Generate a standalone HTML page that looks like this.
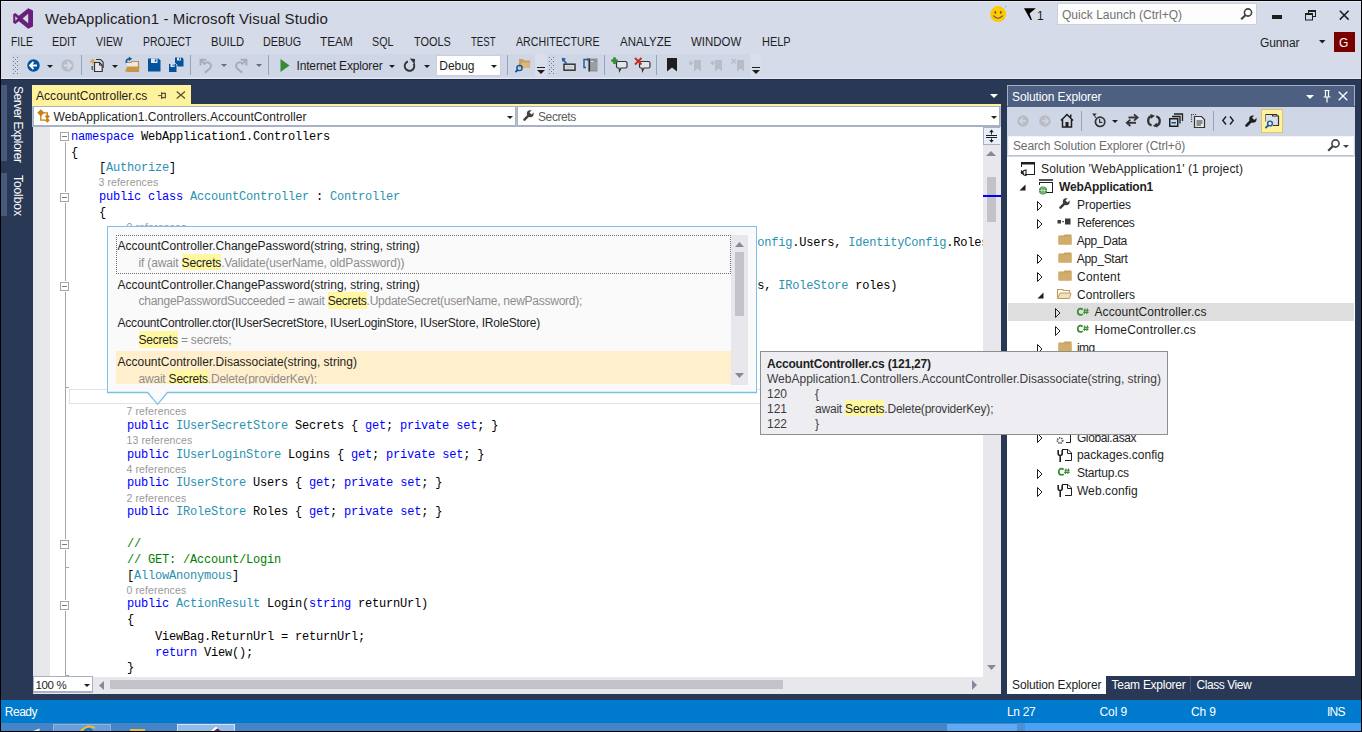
<!DOCTYPE html>
<html><head><meta charset="utf-8">
<style>
*{box-sizing:border-box}
html,body{margin:0;padding:0}
body{width:1362px;height:732px;position:relative;overflow:hidden;background:#293955;font-family:"Liberation Sans",sans-serif;font-size:12px;color:#1E1E1E}
.a{position:absolute}
.t{position:absolute;white-space:pre;line-height:1}
svg{overflow:visible}
.k{color:#0000FF}.y{color:#2B91AF}.c{color:#008000}
</style></head><body>
<div class="a" style="left:0px;top:0px;width:1362px;height:79px;background:#D6DBE9"></div>
<div class="a" style="left:1px;top:1px;width:1360px;height:1px;background:#E6EAF3"></div>
<svg class="a" style="left:13px;top:8px;" width="21" height="21" viewBox="0 0 21 21"><path d="M15.2 0.3 L20 2.4 V18.6 L15.2 20.7 L5.8 13.2 L2.3 15.9 L0.2 14.8 V6.2 L2.3 5.1 L5.8 7.8 Z M15.2 5.8 L9.6 10.5 L15.2 15.2 Z M2.3 8.2 V12.8 L4.6 10.5 Z" fill="#68217A" fill-rule="evenodd"/></svg>
<div class="t" style="left:45px;top:11.30px;font-size:15px;color:#1E1E1E;font-family:'Liberation Sans',sans-serif;letter-spacing:0.12px">WebApplication1 - Microsoft Visual Studio</div>
<div class="t" style="left:11.441666666666666px;top:35.84px;font-size:12px;color:#1E1E1E;font-family:'Liberation Sans',sans-serif;transform:scaleX(0.858);transform-origin:0 0">FILE</div>
<div class="t" style="left:51.996153846153845px;top:35.84px;font-size:12px;color:#1E1E1E;font-family:'Liberation Sans',sans-serif;transform:scaleX(0.904);transform-origin:0 0">EDIT</div>
<div class="t" style="left:96.02903225806452px;top:35.84px;font-size:12px;color:#1E1E1E;font-family:'Liberation Sans',sans-serif;transform:scaleX(0.871);transform-origin:0 0">VIEW</div>
<div class="t" style="left:143.03454545454545px;top:35.84px;font-size:12px;color:#1E1E1E;font-family:'Liberation Sans',sans-serif;transform:scaleX(0.865);transform-origin:0 0">PROJECT</div>
<div class="t" style="left:211.06470588235294px;top:35.84px;font-size:12px;color:#1E1E1E;font-family:'Liberation Sans',sans-serif;transform:scaleX(0.935);transform-origin:0 0">BUILD</div>
<div class="t" style="left:263.4048780487805px;top:35.84px;font-size:12px;color:#1E1E1E;font-family:'Liberation Sans',sans-serif;transform:scaleX(0.895);transform-origin:0 0">DEBUG</div>
<div class="t" style="left:320.01875px;top:35.84px;font-size:12px;color:#1E1E1E;font-family:'Liberation Sans',sans-serif;transform:scaleX(0.981);transform-origin:0 0">TEAM</div>
<div class="t" style="left:372.10869565217394px;top:35.84px;font-size:12px;color:#1E1E1E;font-family:'Liberation Sans',sans-serif;transform:scaleX(0.891);transform-origin:0 0">SQL</div>
<div class="t" style="left:413.79249999999996px;top:35.84px;font-size:12px;color:#1E1E1E;font-family:'Liberation Sans',sans-serif;transform:scaleX(0.907);transform-origin:0 0">TOOLS</div>
<div class="t" style="left:470.7px;top:35.84px;font-size:12px;color:#1E1E1E;font-family:'Liberation Sans',sans-serif;transform:scaleX(0.800);transform-origin:0 0">TEST</div>
<div class="t" style="left:516.2106382978724px;top:35.84px;font-size:12px;color:#1E1E1E;font-family:'Liberation Sans',sans-serif;transform:scaleX(0.889);transform-origin:0 0">ARCHITECTURE</div>
<div class="t" style="left:620.2471698113208px;top:35.84px;font-size:12px;color:#1E1E1E;font-family:'Liberation Sans',sans-serif;transform:scaleX(0.953);transform-origin:0 0">ANALYZE</div>
<div class="t" style="left:691.245283018868px;top:35.84px;font-size:12px;color:#1E1E1E;font-family:'Liberation Sans',sans-serif;transform:scaleX(0.955);transform-origin:0 0">WINDOW</div>
<div class="t" style="left:762.3866666666667px;top:35.84px;font-size:12px;color:#1E1E1E;font-family:'Liberation Sans',sans-serif;transform:scaleX(0.913);transform-origin:0 0">HELP</div>
<svg class="a" style="left:990px;top:5.8px;" width="17" height="17" viewBox="0 0 17 17"><circle cx="8.1" cy="8.1" r="8" fill="#FFC800"/><ellipse cx="5.3" cy="6.4" rx="0.9" ry="1.3" fill="#555"/><ellipse cx="10.8" cy="6.4" rx="0.9" ry="1.3" fill="#555"/><path d="M3.3 9.6 Q8.1 14.8 12.7 9.6" stroke="#555" stroke-width="1.1" fill="none"/><rect x="15" y="0" width="1.2" height="1.2" fill="#00E5FF"/></svg>
<svg class="a" style="left:1024px;top:7.5px;" width="12" height="13" viewBox="0 0 12 13"><path d="M0 0.3 H11.8 L5.6 5.6 L7.9 12 L6.6 12 Z" fill="#000"/></svg>
<div class="t" style="left:1037px;top:9.84px;font-size:12px;color:#1E1E1E;font-family:'Liberation Sans',sans-serif">1</div>
<div class="a" style="left:1057px;top:3px;width:200px;height:22px;background:#FDFDFD;border:1px solid #CCCEDB"></div>
<div class="t" style="left:1062px;top:8.84px;font-size:12px;color:#717171;font-family:'Liberation Sans',sans-serif;letter-spacing:0.02px">Quick Launch (Ctrl+Q)</div>
<svg class="a" style="left:1240px;top:8px;" width="13" height="12" viewBox="0 0 13 12"><circle cx="8" cy="4.5" r="3.6" stroke="#424242" stroke-width="1.6" fill="none"/><path d="M5.6 7 L1.2 11.2" stroke="#424242" stroke-width="2.2"/></svg>
<div class="a" style="left:1272px;top:15px;width:10px;height:4px;background:#1E1E1E"></div>
<svg class="a" style="left:1305px;top:10px;" width="12" height="11" viewBox="0 0 12 11"><rect x="3.5" y="0.5" width="7" height="6" fill="none" stroke="#1E1E1E"/><rect x="0.5" y="3.5" width="7" height="6.5" fill="#D6DBE9" stroke="#1E1E1E"/><path d="M0.5 4 h7 M3.5 1 h7" stroke="#1E1E1E" stroke-width="2"/></svg>
<svg class="a" style="left:1339px;top:10px;" width="11" height="10" viewBox="0 0 11 10"><path d="M0.8 0.8 L9.6 9.6 M9.6 0.8 L0.8 9.6" stroke="#1E1E1E" stroke-width="1.5"/></svg>
<div class="t" style="left:1260px;top:36.84px;font-size:12px;color:#1E1E1E;font-family:'Liberation Sans',sans-serif;letter-spacing:-0.12px">Gunnar</div>
<svg class="a" style="left:1319px;top:40px;" width="7" height="4" viewBox="0 0 7 4"><path d="M0 0 H6.5 L3.25 3.5 Z" fill="#1E1E1E"/></svg>
<div class="a" style="left:1334px;top:32px;width:21px;height:20px;background:#7A0000"></div>
<div class="t" style="left:1339px;top:36.84px;font-size:12px;color:#FFFFFF;font-family:'Liberation Sans',sans-serif">G</div>
<div class="a" style="left:11px;top:54px;width:750px;height:23px;background:#CFD6E5"></div>
<div class="a" style="left:535px;top:54px;width:12px;height:23px;background:#D9DEEA"></div>
<div class="a" style="left:750px;top:54px;width:11px;height:23px;background:#D9DEEA"></div>
<div class="a" style="left:1px;top:78px;width:1360px;height:1px;background:#E6EAF3"></div>
<div class="a" style="left:1px;top:79px;width:1360px;height:1px;background:#1F2D48"></div>
<svg class="a" style="left:13px;top:57px" width="5" height="17" shape-rendering="crispEdges"><rect x="0" y="0" width="1" height="1" fill="#717789"/><rect x="4" y="0" width="1" height="1" fill="#717789"/><rect x="0" y="4" width="1" height="1" fill="#717789"/><rect x="4" y="4" width="1" height="1" fill="#717789"/><rect x="0" y="8" width="1" height="1" fill="#717789"/><rect x="4" y="8" width="1" height="1" fill="#717789"/><rect x="0" y="12" width="1" height="1" fill="#717789"/><rect x="4" y="12" width="1" height="1" fill="#717789"/><rect x="0" y="16" width="1" height="1" fill="#717789"/><rect x="4" y="16" width="1" height="1" fill="#717789"/><rect x="2" y="2" width="1" height="1" fill="#717789"/><rect x="2" y="6" width="1" height="1" fill="#717789"/><rect x="2" y="10" width="1" height="1" fill="#717789"/><rect x="2" y="14" width="1" height="1" fill="#717789"/></svg>
<svg class="a" style="left:549px;top:57px" width="5" height="17" shape-rendering="crispEdges"><rect x="0" y="0" width="1" height="1" fill="#717789"/><rect x="4" y="0" width="1" height="1" fill="#717789"/><rect x="0" y="4" width="1" height="1" fill="#717789"/><rect x="4" y="4" width="1" height="1" fill="#717789"/><rect x="0" y="8" width="1" height="1" fill="#717789"/><rect x="4" y="8" width="1" height="1" fill="#717789"/><rect x="0" y="12" width="1" height="1" fill="#717789"/><rect x="4" y="12" width="1" height="1" fill="#717789"/><rect x="0" y="16" width="1" height="1" fill="#717789"/><rect x="4" y="16" width="1" height="1" fill="#717789"/><rect x="2" y="2" width="1" height="1" fill="#717789"/><rect x="2" y="6" width="1" height="1" fill="#717789"/><rect x="2" y="10" width="1" height="1" fill="#717789"/><rect x="2" y="14" width="1" height="1" fill="#717789"/></svg>
<svg class="a" style="left:27px;top:59px;" width="13" height="13" viewBox="0 0 13 13"><circle cx="6.5" cy="6.5" r="6.2" fill="#00539C"/><path d="M3 6.5 H10 M6.5 3 L3 6.5 L6.5 10" stroke="#fff" stroke-width="1.8" fill="none"/></svg>
<svg class="a" style="left:47px;top:65px;" width="6" height="3" viewBox="0 0 6 3"><path d="M0 0 H6 L3 3 Z" fill="#1E1E1E"/></svg>
<svg class="a" style="left:61px;top:59px;" width="13" height="13" viewBox="0 0 13 13"><circle cx="6.5" cy="6.5" r="6.2" fill="#B9BCC4"/><path d="M3 6.5 H10 M6.5 3 L10 6.5 L6.5 10" stroke="#D6DBE9" stroke-width="1.8" fill="none"/></svg>
<div class="a" style="left:81px;top:55px;width:1px;height:20px;background:#99A2B8"></div>
<svg class="a" style="left:90px;top:57px;" width="15" height="16" viewBox="0 0 15 16"><path d="M2.5 1 L3 3 L4.8 2 L3.8 3.8 L5.8 4.3 L3.8 4.8 L4.8 6.6 L3 5.6 L2.5 7.6 L2 5.6 L0.2 6.6 L1.2 4.8 L-0.8 4.3 L1.2 3.8 L0.2 2 L2 3 Z" fill="#E8A33C"/><path d="M6 2.5 H10.5 L13.2 5.2 V11" fill="none" stroke="#333" stroke-width="1.1"/><path d="M4.5 5.5 H9.5 L12.2 8.2 V14.5 H4.5 Z" fill="#E8E8EC" stroke="#333" stroke-width="1.2"/><path d="M9.5 5.5 V8.2 H12.2" fill="none" stroke="#333" stroke-width="1"/><path d="M2.2 9 V13" stroke="#333" stroke-width="1.1"/></svg>
<svg class="a" style="left:112px;top:65px;" width="6" height="3" viewBox="0 0 6 3"><path d="M0 0 H6 L3 3 Z" fill="#1E1E1E"/></svg>
<svg class="a" style="left:124px;top:57px;" width="16" height="16" viewBox="0 0 16 16"><path d="M3 5.5 H7 L8 4.5 H14.5 V14.5 H3" fill="#E8E8EC" stroke="#C09245" stroke-width="1.2"/><path d="M1 14.5 L3.2 9.5 H15.5 L14.5 14.5 Z" fill="#C8973F"/><path d="M2.5 6 Q1.5 2.2 5.5 1.6" stroke="#1C5AA0" stroke-width="1.8" fill="none"/><path d="M4.8 -0.6 L8.2 1.8 L4.8 4.2 Z" fill="#1C5AA0"/></svg>
<svg class="a" style="left:148px;top:58px;" width="13" height="14" viewBox="0 0 13 14"><path d="M0 0.5 H10.5 L12.5 2.5 V13.5 H0 Z" fill="#00539C"/><rect x="3" y="0.5" width="6.5" height="4.5" fill="#E8E8EC"/><rect x="6.8" y="1.4" width="1.6" height="2.2" fill="#00539C"/></svg>
<svg class="a" style="left:168px;top:57px;" width="16" height="16" viewBox="0 0 16 16"><path d="M7 0.5 H14 L15.5 2 V9.5 H7 Z" fill="#00539C"/><rect x="9" y="0.5" width="4" height="3" fill="#E8E8EC"/><rect x="11" y="1" width="1.2" height="1.6" fill="#00539C"/><path d="M0.5 6.5 H7.5 L9 8 V15.5 H0.5 Z" fill="#00539C" stroke="#CFD6E5" stroke-width="1"/><rect x="2.5" y="7" width="4" height="3" fill="#E8E8EC"/><rect x="4.5" y="7.5" width="1.2" height="1.6" fill="#00539C"/></svg>
<div class="a" style="left:190px;top:55px;width:1px;height:20px;background:#99A2B8"></div>
<svg class="a" style="left:199px;top:58px;" width="14" height="15" viewBox="0 0 14 15"><path d="M1.6 7.5 V1.8 H7.3" stroke="#A8ACB6" stroke-width="2" fill="none"/><path d="M2.2 2.4 L5.5 5.7 Q8 3 10.6 5.2 Q13.5 8 10.4 11 L5.8 14.6" stroke="#A8ACB6" stroke-width="2" fill="none"/></svg>
<svg class="a" style="left:221px;top:64px;" width="6" height="3" viewBox="0 0 6 3"><path d="M0 0 H6 L3 3 Z" fill="#6D6D6D"/></svg>
<svg class="a" style="left:234px;top:58px;" width="14" height="15" viewBox="0 0 14 15"><g transform="translate(14 0) scale(-1 1)"><path d="M1.6 7.5 V1.8 H7.3" stroke="#A8ACB6" stroke-width="2" fill="none"/><path d="M2.2 2.4 L5.5 5.7 Q8 3 10.6 5.2 Q13.5 8 10.4 11 L5.8 14.6" stroke="#A8ACB6" stroke-width="2" fill="none"/></g></svg>
<svg class="a" style="left:256px;top:64px;" width="6" height="3" viewBox="0 0 6 3"><path d="M0 0 H6 L3 3 Z" fill="#6D6D6D"/></svg>
<div class="a" style="left:268px;top:55px;width:1px;height:20px;background:#99A2B8"></div>
<svg class="a" style="left:280px;top:59px;" width="10" height="13" viewBox="0 0 10 13"><path d="M0.5 0 L9.5 6.5 L0.5 13 Z" fill="#388A34"/></svg>
<div class="t" style="left:296.5px;top:59.84px;font-size:12px;color:#1E1E1E;font-family:'Liberation Sans',sans-serif;letter-spacing:-0.16px">Internet Explorer</div>
<svg class="a" style="left:389px;top:65px;" width="6" height="3" viewBox="0 0 6 3"><path d="M0 0 H6 L3 3 Z" fill="#1E1E1E"/></svg>
<svg class="a" style="left:403px;top:58px;" width="14" height="14" viewBox="0 0 14 14"><path d="M10.66 5.6 A4.8 4.8 0 1 1 4.86 3.49" stroke="#333" stroke-width="1.9" fill="none"/><path d="M6.8 0.6 L12 0.9 L11.6 6.2 Z" fill="#333"/></svg>
<svg class="a" style="left:424px;top:65px;" width="6" height="3" viewBox="0 0 6 3"><path d="M0 0 H6 L3 3 Z" fill="#1E1E1E"/></svg>
<div class="a" style="left:436px;top:55px;width:65px;height:21px;background:#FFFFFF;border:1px solid #CCCEDB"></div>
<div class="t" style="left:439.3px;top:59.84px;font-size:12px;color:#1E1E1E;font-family:'Liberation Sans',sans-serif;letter-spacing:-0.05px">Debug</div>
<svg class="a" style="left:491px;top:65px;" width="6" height="3" viewBox="0 0 6 3"><path d="M0 0 H6 L3 3 Z" fill="#1E1E1E"/></svg>
<div class="a" style="left:507px;top:55px;width:1px;height:20px;background:#99A2B8"></div>
<svg class="a" style="left:515px;top:57px;" width="16" height="16" viewBox="0 0 16 16"><path d="M4 2 H8 L9 3.5 H15 V11 H4 Z" fill="#C8A060"/><path d="M5 11 L6.5 5.5 H15.5 L14.5 11 Z" fill="#DCB67A"/><circle cx="4.5" cy="11" r="2.6" stroke="#00539C" stroke-width="1.4" fill="none"/><path d="M2.7 12.8 L0.5 15" stroke="#00539C" stroke-width="1.8"/></svg>
<svg class="a" style="left:537px;top:67px;" width="8" height="7" viewBox="0 0 8 7"><rect x="0" y="0" width="8" height="1" fill="#1E1E1E"/><path d="M0 3 H8 L4 7 Z" fill="#1E1E1E"/></svg>
<svg class="a" style="left:561px;top:57px;" width="15" height="15" viewBox="0 0 15 15"><rect x="3" y="7.2" width="11" height="6" fill="#DADDE5" stroke="#333" stroke-width="1.5"/><rect x="5" y="9" width="7" height="2.5" fill="#C9CCD4"/><path d="M5.5 6.5 L2 2.5" stroke="#1C5AA0" stroke-width="1.6"/><path d="M0.8 0.8 L5 1.6 L1.6 5 Z" fill="#1C5AA0"/></svg>
<svg class="a" style="left:583px;top:57px;" width="15" height="16" viewBox="0 0 15 16"><path d="M3 2.5 H1 V10.5 H3" stroke="#1C5AA0" stroke-width="1.4" fill="none"/><path d="M3 2.5 H5" stroke="#1C5AA0" stroke-width="1.4"/><path d="M4.5 0.5 L6.5 2.5 L4.5 4.5 Z" fill="#1C5AA0"/><rect x="5.5" y="1.5" width="9" height="13" fill="#8E9099"/><rect x="5.5" y="1.5" width="1.5" height="13" fill="#333"/><rect x="8" y="4" width="2.5" height="1" fill="#E8E8EC"/><path d="M8 6 H14.5 M8 8 H14.5 M8 10 H14.5 M8 12 H14.5" stroke="#B0B3BB" stroke-width="0.8"/></svg>
<div class="a" style="left:604px;top:55px;width:1px;height:20px;background:#99A2B8"></div>
<svg class="a" style="left:611px;top:57px;" width="17" height="16" viewBox="0 0 17 16"><path d="M3.5 0.5 V7 M0.5 3.7 H6.5" stroke="#388A34" stroke-width="2.2"/><path d="M7 4.5 H14.5 Q16 4.5 16 6 V9.5 Q16 11 14.5 11 H10 L8.5 14 L8 11 H7 Q5.5 11 5.5 9.5 V6 Q5.5 4.5 7 4.5 Z" fill="#E2E5EC" stroke="#333" stroke-width="1.2"/><path d="M3.5 0.5 V7 M0.5 3.7 H6.5" stroke="#388A34" stroke-width="2.2"/></svg>
<svg class="a" style="left:634px;top:57px;" width="17" height="16" viewBox="0 0 17 16"><path d="M7 4.5 H14.5 Q16 4.5 16 6 V9.5 Q16 11 14.5 11 H10 L8.5 14 L8 11 H7 Q5.5 11 5.5 9.5 V6 Q5.5 4.5 7 4.5 Z" fill="#E2E5EC" stroke="#333" stroke-width="1.2"/><path d="M1 1 L7.5 7.5 M7.5 1 L1 7.5" stroke="#C42B1C" stroke-width="1.8"/></svg>
<div class="a" style="left:656px;top:55px;width:1px;height:20px;background:#99A2B8"></div>
<svg class="a" style="left:667px;top:58px;" width="10" height="14" viewBox="0 0 10 14"><path d="M0 0 H10 V13.5 L5 9.5 L0 13.5 Z" fill="#1E1E1E"/></svg>
<svg class="a" style="left:689px;top:58px;" width="12" height="14" viewBox="0 0 12 14"><path d="M5 2 H12 V13.5 L8.5 10.5 L5 13.5 Z" fill="#B9BCC4"/><path d="M4 5 H0.5 M2.5 3 L0.5 5 L2.5 7" stroke="#B9BCC4" stroke-width="1.4" fill="none"/></svg>
<svg class="a" style="left:710px;top:58px;" width="12" height="14" viewBox="0 0 12 14"><path d="M5 2 H12 V13.5 L8.5 10.5 L5 13.5 Z" fill="#B9BCC4"/><path d="M0 5 H4 M2 3 L4 5 L2 7" stroke="#B9BCC4" stroke-width="1.4" fill="none"/></svg>
<svg class="a" style="left:731px;top:58px;" width="14" height="14" viewBox="0 0 14 14"><path d="M6 2 H13 V13.5 L9.5 10.5 L6 13.5 Z" fill="#B9BCC4"/><path d="M0.5 1 L5 5.5 M5 1 L0.5 5.5" stroke="#B9BCC4" stroke-width="1.4"/></svg>
<svg class="a" style="left:752px;top:67px;" width="8" height="7" viewBox="0 0 8 7"><rect x="0" y="0" width="8" height="1" fill="#1E1E1E"/><path d="M0 3 H8 L4 7 Z" fill="#1E1E1E"/></svg>
<div class="a" style="left:1px;top:85px;width:6px;height:76px;background:#465A7D"></div>
<div class="a" style="left:1px;top:173px;width:6px;height:43px;background:#465A7D"></div>
<div class="t" style="left:24px;top:86px;font-size:12px;color:#FFFFFF;transform-origin:0 0;transform:rotate(90deg);letter-spacing:-0.46px">Server Explorer</div>
<div class="t" style="left:24px;top:175px;font-size:12px;color:#FFFFFF;transform-origin:0 0;transform:rotate(90deg);letter-spacing:-0.08px">Toolbox</div>
<div class="a" style="left:32px;top:85px;width:159px;height:20px;background:#FFF29D"></div>
<div class="a" style="left:32px;top:104px;width:969px;height:2px;background:#FFF29D"></div>
<div class="t" style="left:36.0px;top:89.84px;font-size:12px;color:#1E1E1E;font-family:'Liberation Sans',sans-serif;letter-spacing:0.06px">AccountController.cs</div>
<svg class="a" style="left:158px;top:92px;" width="9" height="8" viewBox="0 0 9 8"><path d="M0 3.6 H3.5" stroke="#5B5435" stroke-width="1"/><path d="M3.6 0.3 V7" stroke="#5B5435" stroke-width="1.2"/><path d="M3.6 1.3 H7.4 V5.6 H3.6" stroke="#5B5435" stroke-width="1.2" fill="none"/></svg>
<svg class="a" style="left:176px;top:91px;" width="10" height="8" viewBox="0 0 10 8"><path d="M0.7 0.5 L9 7.5 M9 0.5 L0.7 7.5" stroke="#5B5435" stroke-width="1.35"/></svg>
<svg class="a" style="left:990px;top:94px;" width="8" height="4" viewBox="0 0 8 4"><path d="M0 0 H8 L4 4 Z" fill="#FFFFFF"/></svg>
<div class="a" style="left:32px;top:106px;width:969px;height:21px;background:#B9C1D1"></div>
<div class="a" style="left:33px;top:106px;width:483px;height:21px;background:#FFFFFF;border:1px solid #A9B2C5;border-bottom-width:2px"></div>
<div class="a" style="left:517px;top:106px;width:483px;height:21px;background:#FFFFFF;border:1px solid #A9B2C5;border-bottom-width:2px"></div>
<svg class="a" style="left:37px;top:109px;" width="14" height="14" viewBox="0 0 14 14"><path d="M0.3 3.8 L3.8 0.3 L7.3 3.8 L3.8 7.3 Z" fill="#CA7F16"/><path d="M3.8 6 V11.2 H8 M6.5 3.8 H10.3 V6" stroke="#CA7F16" stroke-width="1.3" fill="none"/><path d="M7.8 7.5 L10.3 5 L12.8 7.5 L10.3 10 Z M7.8 11.2 L10.3 8.7 L12.8 11.2 L10.3 13.7 Z" fill="#CA7F16"/></svg>
<div class="t" style="left:53.5px;top:110.84px;font-size:12px;color:#1E1E1E;font-family:'Liberation Sans',sans-serif;letter-spacing:0.07px">WebApplication1.Controllers.AccountController</div>
<svg class="a" style="left:507px;top:116px;" width="6" height="3" viewBox="0 0 6 3"><path d="M0 0 H6 L3 3 Z" fill="#1E1E1E"/></svg>
<svg class="a" style="left:523px;top:110px;" width="12" height="12" viewBox="0 0 12 12"><g transform="scale(0.92)"><path d="M1.6 10.4 L5.6 6.4" stroke="#424242" stroke-width="2.8" stroke-linecap="round"/><circle cx="7.9" cy="4.1" r="3.7" fill="#424242"/><path d="M8.2 3.8 L12.5 -0.5" stroke="#FFFFFF" stroke-width="3.2"/></g></svg>
<div class="t" style="left:538px;top:110.84px;font-size:12px;color:#5D5D5D;font-family:'Liberation Sans',sans-serif;letter-spacing:-0.4px">Secrets</div>
<svg class="a" style="left:991px;top:116px;" width="6" height="3" viewBox="0 0 6 3"><path d="M0 0 H6 L3 3 Z" fill="#1E1E1E"/></svg>
<div class="a" style="left:33px;top:127px;width:950px;height:550px;background:#FFFFFF"></div>
<div class="a" style="left:33px;top:127px;width:17px;height:550px;background:#E6E7E8"></div>
<div class="a" style="left:983px;top:127px;width:18px;height:550px;background:#E8E8EC"></div>
<div class="a" style="left:983px;top:127px;width:18px;height:18px;background:#E8EEFA;border:1px solid #A9B2C5"></div>
<div class="a" style="left:1000px;top:127px;width:1px;height:18px;background:#E8EEFA"></div>
<svg class="a" style="left:986px;top:129px;" width="11" height="14" viewBox="0 0 11 14"><path d="M0 6.5 H11 M0 8.5 H11" stroke="#1E1E1E" stroke-width="1"/><path d="M5.5 2 V5.5 M5.5 9.5 V12" stroke="#1E1E1E" stroke-width="1"/><path d="M3.2 3.2 L5.5 0.5 L7.8 3.2 Z M3.2 11 L5.5 13.7 L7.8 11 Z" fill="#1E1E1E"/></svg>
<svg class="a" style="left:986px;top:151px;" width="10" height="5" viewBox="0 0 10 5"><path d="M0 5 L5 0 L10 5 Z" fill="#868999"/></svg>
<div class="a" style="left:987px;top:177px;width:9px;height:45px;background:#C2C3C9"></div>
<div class="a" style="left:983px;top:195px;width:18px;height:2px;background:#0000FF"></div>
<svg class="a" style="left:987px;top:665px;" width="9" height="5" viewBox="0 0 9 5"><path d="M0 0 H9 L4.5 5 Z" fill="#868999"/></svg>
<div class="a" style="left:33px;top:677px;width:968px;height:17px;background:#E8E8EC"></div>
<div class="a" style="left:33px;top:676px;width:60px;height:17px;background:#FFFFFF;border:1px solid #A9B2C5;border-bottom-width:2px"></div>
<div class="t" style="left:35.5px;top:680.27px;font-size:11.5px;color:#1E1E1E;font-family:'Liberation Sans',sans-serif;letter-spacing:-0.35px">100 %</div>
<svg class="a" style="left:84px;top:684px;" width="6" height="3" viewBox="0 0 6 3"><path d="M0 0 H6 L3 3 Z" fill="#1E1E1E"/></svg>
<svg class="a" style="left:99px;top:681px;" width="5" height="9" viewBox="0 0 5 9"><path d="M5 0 V9 L0 4.5 Z" fill="#868999"/></svg>
<div class="a" style="left:110px;top:680px;width:673px;height:9px;background:#C2C3C9"></div>
<svg class="a" style="left:972px;top:680px;" width="5" height="10" viewBox="0 0 5 10"><path d="M0 0 V10 L5 5 Z" fill="#868999"/></svg>
<div class="a" style="left:65px;top:141px;width:1px;height:535px;background:#A5A5A5"></div>
<div class="a" style="left:64px;top:131px;width:3px;height:11px;background:#FFFFFF"></div>
<div class="a" style="left:60px;top:132px;width:9px;height:9px;background:#FFFFFF;border:1px solid #A5A5A5"></div>
<div class="a" style="left:62px;top:135.5px;width:5px;height:1.5px;background:#7A7A7A"></div>
<div class="a" style="left:64px;top:192px;width:3px;height:11px;background:#FFFFFF"></div>
<div class="a" style="left:60px;top:193px;width:9px;height:9px;background:#FFFFFF;border:1px solid #A5A5A5"></div>
<div class="a" style="left:62px;top:196.5px;width:5px;height:1.5px;background:#7A7A7A"></div>
<div class="a" style="left:64px;top:281px;width:3px;height:11px;background:#FFFFFF"></div>
<div class="a" style="left:60px;top:282px;width:9px;height:9px;background:#FFFFFF;border:1px solid #A5A5A5"></div>
<div class="a" style="left:62px;top:285.5px;width:5px;height:1.5px;background:#7A7A7A"></div>
<div class="a" style="left:64px;top:539px;width:3px;height:11px;background:#FFFFFF"></div>
<div class="a" style="left:60px;top:540px;width:9px;height:9px;background:#FFFFFF;border:1px solid #A5A5A5"></div>
<div class="a" style="left:62px;top:543.5px;width:5px;height:1.5px;background:#7A7A7A"></div>
<div class="a" style="left:64px;top:600px;width:3px;height:11px;background:#FFFFFF"></div>
<div class="a" style="left:60px;top:601px;width:9px;height:9px;background:#FFFFFF;border:1px solid #A5A5A5"></div>
<div class="a" style="left:62px;top:604.5px;width:5px;height:1.5px;background:#7A7A7A"></div>
<div class="a" style="left:65px;top:387px;width:4px;height:1px;background:#A5A5A5"></div>
<div class="a" style="left:65px;top:567px;width:4px;height:1px;background:#A5A5A5"></div>
<div class="a" style="left:65px;top:675px;width:4px;height:1px;background:#A5A5A5"></div>
<div class="a" style="left:0;top:0;width:1362px;height:732px;clip-path:inset(128px 379px 56px 33px)">
<div class="t" style="left:71px;top:130.80px;font-family:'Liberation Mono',monospace;font-size:12px;letter-spacing:-0.2px;color:#000"><span class="k">namespace</span> WebApplication1.Controllers</div>
<div class="t" style="left:71px;top:146.80px;font-family:'Liberation Mono',monospace;font-size:12px;letter-spacing:-0.2px;color:#000">{</div>
<div class="t" style="left:99px;top:162.30px;font-family:'Liberation Mono',monospace;font-size:12px;letter-spacing:-0.2px;color:#000">[<span class="y">Authorize</span>]</div>
<div class="t" style="left:98.5px;top:177.11px;font-size:10.5px;color:#999999;font-family:'Liberation Sans',sans-serif;letter-spacing:0.12px">3 references</div>
<div class="t" style="left:99px;top:191.30px;font-family:'Liberation Mono',monospace;font-size:12px;letter-spacing:-0.2px;color:#000"><span class="k">public</span> <span class="k">class</span> <span class="y">AccountController</span> : <span class="y">Controller</span></div>
<div class="t" style="left:99px;top:206.80px;font-family:'Liberation Mono',monospace;font-size:12px;letter-spacing:-0.2px;color:#000">{</div>
<div class="t" style="left:126.5px;top:222.11px;font-size:10.5px;color:#999999;font-family:'Liberation Sans',sans-serif;letter-spacing:0.12px">0 references</div>
<div class="t" style="left:127px;top:236.80px;font-family:'Liberation Mono',monospace;font-size:12px;letter-spacing:-0.2px;color:#000"><span class="k">public</span> AccountController() : <span class="k">this</span>(<span class="y">IdentityConfig</span>.Secrets, <span class="y">IdentityConfig</span>.Logins, <span class="y">IdentityConfig</span>.Users, <span class="y">IdentityConfig</span>.Roles)</div>
<div class="t" style="left:127px;top:280.40px;font-family:'Liberation Mono',monospace;font-size:12px;letter-spacing:-0.2px;color:#000"><span class="k">public</span> AccountController(<span class="y">IUserSecretStore</span> secrets, <span class="y">IUserLoginStore</span> logins, <span class="y">IUserStore</span> users, <span class="y">IRoleStore</span> roles)</div>
<div class="a" style="left:69px;top:389px;width:914px;height:15px;border:1px solid #E2E2E2"></div>
<div class="t" style="left:126.5px;top:406.11px;font-size:10.5px;color:#999999;font-family:'Liberation Sans',sans-serif;letter-spacing:0.12px">7 references</div>
<div class="t" style="left:127px;top:419.80px;font-family:'Liberation Mono',monospace;font-size:12px;letter-spacing:-0.2px;color:#000"><span class="k">public</span> <span class="y">IUserSecretStore</span> Secrets { <span class="k">get</span>; <span class="k">private</span> <span class="k">set</span>; }</div>
<div class="t" style="left:126.5px;top:435.11px;font-size:10.5px;color:#999999;font-family:'Liberation Sans',sans-serif;letter-spacing:0.12px">13 references</div>
<div class="t" style="left:127px;top:448.80px;font-family:'Liberation Mono',monospace;font-size:12px;letter-spacing:-0.2px;color:#000"><span class="k">public</span> <span class="y">IUserLoginStore</span> Logins { <span class="k">get</span>; <span class="k">private</span> <span class="k">set</span>; }</div>
<div class="t" style="left:126.5px;top:463.61px;font-size:10.5px;color:#999999;font-family:'Liberation Sans',sans-serif;letter-spacing:0.12px">4 references</div>
<div class="t" style="left:127px;top:477.00px;font-family:'Liberation Mono',monospace;font-size:12px;letter-spacing:-0.2px;color:#000"><span class="k">public</span> <span class="y">IUserStore</span> Users { <span class="k">get</span>; <span class="k">private</span> <span class="k">set</span>; }</div>
<div class="t" style="left:126.5px;top:492.61px;font-size:10.5px;color:#999999;font-family:'Liberation Sans',sans-serif;letter-spacing:0.12px">2 references</div>
<div class="t" style="left:127px;top:505.80px;font-family:'Liberation Mono',monospace;font-size:12px;letter-spacing:-0.2px;color:#000"><span class="k">public</span> <span class="y">IRoleStore</span> Roles { <span class="k">get</span>; <span class="k">private</span> <span class="k">set</span>; }</div>
<div class="t" style="left:127px;top:538.30px;font-family:'Liberation Mono',monospace;font-size:12px;letter-spacing:-0.2px;color:#000"><span class="c">//</span></div>
<div class="t" style="left:127px;top:554.10px;font-family:'Liberation Mono',monospace;font-size:12px;letter-spacing:-0.2px;color:#000"><span class="c">// GET: /Account/Login</span></div>
<div class="t" style="left:127px;top:570.10px;font-family:'Liberation Mono',monospace;font-size:12px;letter-spacing:-0.2px;color:#000">[<span class="y">AllowAnonymous</span>]</div>
<div class="t" style="left:126.5px;top:584.61px;font-size:10.5px;color:#999999;font-family:'Liberation Sans',sans-serif;letter-spacing:0.12px">0 references</div>
<div class="t" style="left:127px;top:598.30px;font-family:'Liberation Mono',monospace;font-size:12px;letter-spacing:-0.2px;color:#000"><span class="k">public</span> <span class="y">ActionResult</span> Login(<span class="k">string</span> returnUrl)</div>
<div class="t" style="left:127px;top:614.30px;font-family:'Liberation Mono',monospace;font-size:12px;letter-spacing:-0.2px;color:#000">{</div>
<div class="t" style="left:155px;top:630.80px;font-family:'Liberation Mono',monospace;font-size:12px;letter-spacing:-0.2px;color:#000">ViewBag.ReturnUrl = returnUrl;</div>
<div class="t" style="left:155px;top:646.80px;font-family:'Liberation Mono',monospace;font-size:12px;letter-spacing:-0.2px;color:#000"><span class="k">return</span> View();</div>
<div class="t" style="left:127px;top:662.30px;font-family:'Liberation Mono',monospace;font-size:12px;letter-spacing:-0.2px;color:#000">}</div>
</div>
<div class="a" style="left:107px;top:226px;width:650px;height:167px;background:#FAFAFA;border:1px solid #7BC1EA;border-bottom:none"></div>
<svg class="a" style="left:107px;top:391px;" width="650" height="15" viewBox="0 0 650 15"><path d="M40.7 0 L50.5 12.3 L60.4 0 Z" fill="#FAFAFA"/><path d="M0 1.5 H40.7 L50.5 13.3 L60.4 1.5 H650" fill="none" stroke="#7BC1EA" stroke-width="1.3"/></svg>
<div class="a" style="left:116px;top:351px;width:615px;height:33px;background:#FFEFCC"></div>
<div class="a" style="left:116px;top:235px;width:615px;height:39px;border:1px dotted #6D6D6D"></div>
<div class="t" style="left:117.5px;top:239.84px;font-size:12px;color:#1E1E1E;font-family:'Liberation Sans',sans-serif">AccountController.ChangePassword(string, string, string)</div>
<div class="t" style="left:138.5px;top:256.54px;font-size:12px;color:#8D8D8D;letter-spacing:-0.16px">if (await <span style="color:#1E1E1E;background:#FFF8A0;padding:2px 0 0.5px 0">Secrets</span>.Validate(userName, oldPassword))</div>
<div class="t" style="left:117.5px;top:278.64px;font-size:12px;color:#1E1E1E;font-family:'Liberation Sans',sans-serif">AccountController.ChangePassword(string, string, string)</div>
<div class="t" style="left:138.5px;top:295.34px;font-size:12px;color:#8D8D8D;letter-spacing:-0.25px">changePasswordSucceeded = await <span style="color:#1E1E1E;background:#FFF8A0;padding:2px 0 0.5px 0">Secrets</span>.UpdateSecret(userName, newPassword);</div>
<div class="t" style="left:117.5px;top:317.34px;font-size:12px;color:#1E1E1E;font-family:'Liberation Sans',sans-serif;letter-spacing:-0.2px">AccountController.ctor(IUserSecretStore, IUserLoginStore, IUserStore, IRoleStore)</div>
<div class="t" style="left:138.5px;top:334.04px;font-size:12px;color:#8D8D8D;letter-spacing:-0.2px"><span style="color:#1E1E1E;background:#FFF8A0;padding:2px 0 0.5px 0">Secrets</span> = secrets;</div>
<div class="t" style="left:117.5px;top:356.14px;font-size:12px;color:#1E1E1E;font-family:'Liberation Sans',sans-serif">AccountController.Disassociate(string, string)</div>
<div class="t" style="left:138.5px;top:372.84px;font-size:12px;color:#8D8D8D;letter-spacing:-0.21px">await <span style="color:#1E1E1E;background:#FFF8A0;padding:2px 0 0.5px 0">Secrets</span>.Delete(providerKey);</div>
<div class="a" style="left:108px;top:384px;width:623px;height:7px;background:#FAFAFA"></div>
<div class="a" style="left:731px;top:235px;width:17px;height:150px;background:#E8E8EC"></div>
<svg class="a" style="left:735px;top:242px;" width="9" height="5" viewBox="0 0 9 5"><path d="M0 5 L4.5 0 L9 5 Z" fill="#868999"/></svg>
<div class="a" style="left:735px;top:252px;width:9px;height:64px;background:#C2C3C9"></div>
<svg class="a" style="left:735px;top:373px;" width="9" height="5" viewBox="0 0 9 5"><path d="M0 0 H9 L4.5 5 Z" fill="#868999"/></svg>
<div class="a" style="left:1007px;top:85px;width:348px;height:591px;background:#FFFFFF"></div>
<div class="a" style="left:1007px;top:85px;width:348px;height:22px;background:#4D6082;border:1px solid #A6B0C4"></div>
<div class="a" style="left:1007px;top:106px;width:348px;height:1px;background:#4D6082"></div>
<div class="t" style="left:1012px;top:90.84px;font-size:12px;color:#FFFFFF;font-family:'Liberation Sans',sans-serif;letter-spacing:-0.12px">Solution Explorer</div>
<svg class="a" style="left:1306px;top:94.5px;" width="8" height="4" viewBox="0 0 8 4"><path d="M0 0 H8 L4 4 Z" fill="#FFFFFF"/></svg>
<svg class="a" style="left:1323px;top:90px;" width="8" height="13" viewBox="0 0 8 13"><path d="M1.5 0.5 H6.5 M2.5 0.5 V7 H5.5 V0.5 M0.5 7 H7.5 M4 7 V12.5" stroke="#FFFFFF" stroke-width="1.2" fill="none"/></svg>
<svg class="a" style="left:1338px;top:91px;" width="10" height="10" viewBox="0 0 10 10"><path d="M0.7 0.7 L9.3 9.3 M9.3 0.7 L0.7 9.3" stroke="#FFFFFF" stroke-width="1.3"/></svg>
<div class="a" style="left:1007px;top:107px;width:348px;height:50px;background:#CFD6E5"></div>
<svg class="a" style="left:1017px;top:115px;" width="12" height="12" viewBox="0 0 12 12"><circle cx="6" cy="6" r="5.8" fill="#B9BCC4"/><path d="M3 6 H9 M6 3 L3 6 L6 9" stroke="#CFD6E5" stroke-width="1.5" fill="none"/></svg>
<svg class="a" style="left:1039px;top:115px;" width="12" height="12" viewBox="0 0 12 12"><circle cx="6" cy="6" r="5.8" fill="#B9BCC4"/><path d="M3 6 H9 M6 3 L9 6 L6 9" stroke="#CFD6E5" stroke-width="1.5" fill="none"/></svg>
<svg class="a" style="left:1060px;top:113px;" width="14" height="15" viewBox="0 0 14 15"><path d="M1 7.5 L7 1.5 L13 7.5 M2.5 6.5 V14 H11.5 V6.5" stroke="#1E1E1E" stroke-width="1.5" fill="none"/><rect x="5.5" y="9" width="3" height="5" fill="#1E1E1E"/><rect x="10" y="1.5" width="1.5" height="3" fill="#1E1E1E"/></svg>
<div class="a" style="left:1081px;top:111px;width:1px;height:20px;background:#99A2B8"></div>
<svg class="a" style="left:1092px;top:113px;" width="14" height="15" viewBox="0 0 14 15"><circle cx="8.1" cy="8.8" r="4.7" stroke="#333" stroke-width="1.7" fill="none"/><path d="M7.6 6 V9.3 H10.3" stroke="#333" stroke-width="1.2" fill="none"/><path d="M0.2 0.5 H4.8 L2.2 3.5 Z" fill="#333"/><path d="M2.5 2.5 L4 5" stroke="#333" stroke-width="1"/></svg>
<svg class="a" style="left:1112px;top:120px;" width="6" height="3" viewBox="0 0 6 3"><path d="M0 0 H6 L3 3 Z" fill="#1E1E1E"/></svg>
<svg class="a" style="left:1126px;top:113px;" width="13" height="14" viewBox="0 0 13 14"><path d="M2.5 4.5 H10" stroke="#333" stroke-width="1.9"/><path d="M8 1.3 L11.6 4.5 L8 7.7" stroke="#333" stroke-width="1.8" fill="none"/><path d="M10 9.8 H2" stroke="#333" stroke-width="1.9"/><path d="M4.4 6.6 L0.8 9.8 L4.4 13" stroke="#333" stroke-width="1.8" fill="none"/></svg>
<svg class="a" style="left:1147px;top:114px;" width="14" height="14" viewBox="0 0 14 14"><path d="M5.2 1.8 A4.9 4.9 0 0 0 4.6 11.3" stroke="#333" stroke-width="2.3" fill="none"/><path d="M8.6 11.9 A4.9 4.9 0 0 0 9.3 2.4" stroke="#333" stroke-width="2.3" fill="none"/><path d="M3.5 0 L8 1.7 L4 4.8 Z" fill="#333"/><path d="M10.3 13.6 L5.8 12 L9.8 8.8 Z" fill="#333"/></svg>
<svg class="a" style="left:1169px;top:113px;" width="14" height="14" viewBox="0 0 14 14"><rect x="0.75" y="5.75" width="8" height="7.5" fill="none" stroke="#1E1E1E" stroke-width="1.5"/><path d="M3 3.5 H11 V10.5 M5 1 H13.5 V8" stroke="#1E1E1E" stroke-width="1.3" fill="none"/><rect x="2.5" y="9" width="4.5" height="1.5" fill="#00539C"/></svg>
<svg class="a" style="left:1190px;top:113px;" width="16" height="16" viewBox="0 0 16 16"><path d="M1.5 9 V1.5 H7" stroke="#333" stroke-width="1.1" stroke-dasharray="1.1 1.1" fill="none"/><path d="M4.5 3.5 H11.5 L14.5 6.5 V14.5 H4.5 Z" fill="#E6E9F0" stroke="#333" stroke-width="1.2"/><path d="M6.5 8 H12.5 M6.5 10 H12.5 M6.5 12 H11" stroke="#333" stroke-width="1"/></svg>
<div class="a" style="left:1213px;top:111px;width:1px;height:20px;background:#99A2B8"></div>
<svg class="a" style="left:1222px;top:116px;" width="12" height="9" viewBox="0 0 12 9"><path d="M4 0.5 L0.8 4.5 L4 8.5 M8 0.5 L11.2 4.5 L8 8.5" stroke="#1E1E1E" stroke-width="1.4" fill="none"/></svg>
<svg class="a" style="left:1244.5px;top:114.5px;" width="12" height="12" viewBox="0 0 12 12"><g transform="scale(1.0)"><path d="M1.6 10.4 L5.6 6.4" stroke="#1E1E1E" stroke-width="2.8" stroke-linecap="round"/><circle cx="7.9" cy="4.1" r="3.7" fill="#1E1E1E"/><path d="M8.2 3.8 L12.5 -0.5" stroke="#CFD6E5" stroke-width="3.2"/></g></svg>
<div class="a" style="left:1261px;top:109px;width:22px;height:24px;background:#FFF29D;border:1px solid #E5C365"></div>
<svg class="a" style="left:1264px;top:113px;" width="16" height="16" viewBox="0 0 16 16"><path d="M2 8.5 V1.5 H8.5 V3 H14.5 V12.5 H9" fill="#DCDFE8" stroke="#333" stroke-width="1.2"/><rect x="2" y="2" width="6" height="9" fill="#DCDFE8"/><path d="M8.5 1.5 H13 V3" fill="none" stroke="#333" stroke-width="1"/><circle cx="6" cy="10.5" r="2.4" fill="#E8E8EC" stroke="#1C5AA0" stroke-width="1.4"/><path d="M4.2 12.3 L2 14.5" stroke="#1C5AA0" stroke-width="1.8" stroke-linecap="round"/></svg>
<div class="a" style="left:1008px;top:136px;width:346px;height:20px;background:#FFFFFF;border:1px solid #F2F4F8;border-bottom-color:#BCC4D3"></div>
<div class="t" style="left:1013px;top:139.84px;font-size:12px;color:#6D6D6D;font-family:'Liberation Sans',sans-serif;letter-spacing:-0.13px">Search Solution Explorer (Ctrl+ö)</div>
<svg class="a" style="left:1327px;top:139px;" width="13" height="13" viewBox="0 0 13 13"><circle cx="8.5" cy="4.5" r="3.6" stroke="#424242" stroke-width="1.6" fill="none"/><path d="M6 7 L1.2 11.8" stroke="#424242" stroke-width="2.2"/></svg>
<svg class="a" style="left:1343px;top:145px;" width="6" height="3" viewBox="0 0 6 3"><path d="M0 0 H6 L3 3 Z" fill="#424242"/></svg>
<div class="a" style="left:1008px;top:302.5px;width:346px;height:18px;background:#DEDEDE"></div>
<svg class="a" style="left:1020px;top:162px;" width="16" height="15" viewBox="0 0 16 15"><rect x="1.5" y="0.5" width="13" height="12" fill="none" stroke="#1E1E1E"/><rect x="1.5" y="0.5" width="13" height="2" fill="#1E1E1E"/><rect x="0" y="5" width="7.5" height="10" fill="#FFFFFF"/><path d="M1 8.5 L4 11.5 M1 11.5 L4 8.5 L6 8 V13.5 L4 13 L1 10" stroke="#1E1E1E" stroke-width="1.1" fill="none"/><path d="M5 12.5 H14.5 V7" stroke="#1E1E1E" fill="none"/></svg>
<div class="t" style="left:1041.1px;top:163.34px;font-size:12px;color:#1E1E1E;font-family:'Liberation Sans',sans-serif;letter-spacing:0.09px">Solution 'WebApplication1' (1 project)</div>
<svg class="a" style="left:1019px;top:184.38px;" width="7" height="7" viewBox="0 0 7 7"><path d="M6.5 0.5 V6.5 H0.5 Z" fill="#1E1E1E"/></svg>
<svg class="a" style="left:1038px;top:179px;" width="16" height="17" viewBox="0 0 16 17"><rect x="1.5" y="3.5" width="13" height="10" fill="none" stroke="#1E1E1E"/><rect x="1" y="0" width="14" height="2" fill="#555"/><rect x="0" y="6" width="7" height="11" fill="#FFFFFF"/><circle cx="5" cy="11.5" r="4" fill="#388A34"/><path d="M1.5 11.5 H8.5 M5 7.5 V15.5 M3 8.5 Q4.2 11.5 3 14.5 M7 8.5 Q5.8 11.5 7 14.5" stroke="#C8E6C0" stroke-width="0.8" fill="none"/></svg>
<div class="t" style="left:1059.1px;top:181.22px;font-size:12px;color:#1E1E1E;font-family:'Liberation Sans',sans-serif;font-weight:700;letter-spacing:-0.21px">WebApplication1</div>
<svg class="a" style="left:1037px;top:200.76px;" width="6" height="10" viewBox="0 0 6 10"><path d="M0.5 0.5 L5 5 L0.5 9.5 Z" fill="none" stroke="#1E1E1E" stroke-width="1"/></svg>
<svg class="a" style="left:1059px;top:198.26px;" width="12" height="12" viewBox="0 0 12 12"><g transform="scale(0.92)"><path d="M1.6 10.4 L5.6 6.4" stroke="#3A3A3A" stroke-width="2.8" stroke-linecap="round"/><circle cx="7.9" cy="4.1" r="3.7" fill="#3A3A3A"/><path d="M8.2 3.8 L12.5 -0.5" stroke="#FFFFFF" stroke-width="3.2"/></g></svg>
<div class="t" style="left:1077.1px;top:199.10px;font-size:12px;color:#1E1E1E;font-family:'Liberation Sans',sans-serif;letter-spacing:-0.09px">Properties</div>
<svg class="a" style="left:1037px;top:218.64px;" width="6" height="10" viewBox="0 0 6 10"><path d="M0.5 0.5 L5 5 L0.5 9.5 Z" fill="none" stroke="#1E1E1E" stroke-width="1"/></svg>
<svg class="a" style="left:1057px;top:218.14px;" width="14" height="7" viewBox="0 0 14 7"><rect x="0.5" y="2" width="3.5" height="3.5" fill="#3A3A3A"/><rect x="8" y="0.5" width="5.5" height="6" fill="#3A3A3A"/><rect x="5" y="3.2" width="2" height="1" fill="#3A3A3A"/></svg>
<div class="t" style="left:1077.1px;top:216.98px;font-size:12px;color:#1E1E1E;font-family:'Liberation Sans',sans-serif;letter-spacing:-0.41px">References</div>
<svg class="a" style="left:1058px;top:234.01999999999998px;" width="14" height="11" viewBox="0 0 14 11"><path d="M0.5 1.5 H5.5 L6.5 0.5 H13.5 V10.5 H0.5 Z" fill="#C8A060"/><rect x="0.5" y="2.5" width="13" height="8" fill="#D2AC6A"/></svg>
<div class="t" style="left:1076.7px;top:234.86px;font-size:12px;color:#1E1E1E;font-family:'Liberation Sans',sans-serif;letter-spacing:-0.4px">App_Data</div>
<svg class="a" style="left:1037px;top:254.39999999999998px;" width="6" height="10" viewBox="0 0 6 10"><path d="M0.5 0.5 L5 5 L0.5 9.5 Z" fill="none" stroke="#1E1E1E" stroke-width="1"/></svg>
<svg class="a" style="left:1058px;top:251.89999999999998px;" width="14" height="11" viewBox="0 0 14 11"><path d="M0.5 1.5 H5.5 L6.5 0.5 H13.5 V10.5 H0.5 Z" fill="#C8A060"/><rect x="0.5" y="2.5" width="13" height="8" fill="#D2AC6A"/></svg>
<div class="t" style="left:1076.7px;top:252.74px;font-size:12px;color:#1E1E1E;font-family:'Liberation Sans',sans-serif;letter-spacing:-0.27px">App_Start</div>
<svg class="a" style="left:1037px;top:272.28px;" width="6" height="10" viewBox="0 0 6 10"><path d="M0.5 0.5 L5 5 L0.5 9.5 Z" fill="none" stroke="#1E1E1E" stroke-width="1"/></svg>
<svg class="a" style="left:1058px;top:269.78px;" width="14" height="11" viewBox="0 0 14 11"><path d="M0.5 1.5 H5.5 L6.5 0.5 H13.5 V10.5 H0.5 Z" fill="#C8A060"/><rect x="0.5" y="2.5" width="13" height="8" fill="#D2AC6A"/></svg>
<div class="t" style="left:1077.1px;top:270.62px;font-size:12px;color:#1E1E1E;font-family:'Liberation Sans',sans-serif;letter-spacing:0.2px">Content</div>
<svg class="a" style="left:1037px;top:291.65999999999997px;" width="7" height="7" viewBox="0 0 7 7"><path d="M6.5 0.5 V6.5 H0.5 Z" fill="#1E1E1E"/></svg>
<svg class="a" style="left:1057px;top:287.65999999999997px;" width="14" height="11" viewBox="0 0 14 11"><path d="M0.5 10.5 V1.5 H5.5 L6.5 2.5 H12.5 V4.5" fill="none" stroke="#C09A5B" stroke-width="1.1"/><path d="M0.5 10.5 L3 5 H14 L12.5 10.5 Z" fill="#F0E0C0" stroke="#C09A5B" stroke-width="1"/></svg>
<div class="t" style="left:1077.1px;top:288.50px;font-size:12px;color:#1E1E1E;font-family:'Liberation Sans',sans-serif">Controllers</div>
<svg class="a" style="left:1055px;top:308.03999999999996px;" width="6" height="10" viewBox="0 0 6 10"><path d="M0.5 0.5 L5 5 L0.5 9.5 Z" fill="none" stroke="#1E1E1E" stroke-width="1"/></svg>
<svg class="a" style="left:1076.5px;top:307.53999999999996px;" width="13" height="8" viewBox="0 0 13 8"><path d="M5.6 1.6 Q4.8 0.7 3.5 0.7 Q0.8 0.7 0.8 3.8 Q0.8 6.9 3.5 6.9 Q4.9 6.9 5.7 6" stroke="#388A34" stroke-width="1.7" fill="none"/><path d="M8 0.5 L7.3 6 M10.5 0.5 L9.8 6 M6.5 2.2 H11.8 M6.2 4.4 H11.5" stroke="#388A34" stroke-width="1.1"/></svg>
<div class="t" style="left:1094.5px;top:306.38px;font-size:12px;color:#1E1E1E;font-family:'Liberation Sans',sans-serif;letter-spacing:0.1px">AccountController.cs</div>
<svg class="a" style="left:1055px;top:325.91999999999996px;" width="6" height="10" viewBox="0 0 6 10"><path d="M0.5 0.5 L5 5 L0.5 9.5 Z" fill="none" stroke="#1E1E1E" stroke-width="1"/></svg>
<svg class="a" style="left:1076.5px;top:325.41999999999996px;" width="13" height="8" viewBox="0 0 13 8"><path d="M5.6 1.6 Q4.8 0.7 3.5 0.7 Q0.8 0.7 0.8 3.8 Q0.8 6.9 3.5 6.9 Q4.9 6.9 5.7 6" stroke="#388A34" stroke-width="1.7" fill="none"/><path d="M8 0.5 L7.3 6 M10.5 0.5 L9.8 6 M6.5 2.2 H11.8 M6.2 4.4 H11.5" stroke="#388A34" stroke-width="1.1"/></svg>
<div class="t" style="left:1094.5px;top:324.26px;font-size:12px;color:#1E1E1E;font-family:'Liberation Sans',sans-serif;letter-spacing:0.16px">HomeController.cs</div>
<svg class="a" style="left:1037px;top:343.79999999999995px;" width="6" height="10" viewBox="0 0 6 10"><path d="M0.5 0.5 L5 5 L0.5 9.5 Z" fill="none" stroke="#1E1E1E" stroke-width="1"/></svg>
<svg class="a" style="left:1058px;top:341.29999999999995px;" width="14" height="11" viewBox="0 0 14 11"><path d="M0.5 1.5 H5.5 L6.5 0.5 H13.5 V10.5 H0.5 Z" fill="#C8A060"/><rect x="0.5" y="2.5" width="13" height="8" fill="#D2AC6A"/></svg>
<div class="t" style="left:1076.9px;top:342.14px;font-size:12px;color:#1E1E1E;font-family:'Liberation Sans',sans-serif;letter-spacing:-0.5px">img</div>
<svg class="a" style="left:1037px;top:361.67999999999995px;" width="6" height="10" viewBox="0 0 6 10"><path d="M0.5 0.5 L5 5 L0.5 9.5 Z" fill="none" stroke="#1E1E1E" stroke-width="1"/></svg>
<svg class="a" style="left:1058px;top:359.17999999999995px;" width="14" height="11" viewBox="0 0 14 11"><path d="M0.5 1.5 H5.5 L6.5 0.5 H13.5 V10.5 H0.5 Z" fill="#C8A060"/><rect x="0.5" y="2.5" width="13" height="8" fill="#D2AC6A"/></svg>
<div class="t" style="left:1076.5px;top:360.02px;font-size:12px;color:#1E1E1E;font-family:'Liberation Sans',sans-serif;letter-spacing:-0.12px">Models</div>
<svg class="a" style="left:1037px;top:379.56px;" width="6" height="10" viewBox="0 0 6 10"><path d="M0.5 0.5 L5 5 L0.5 9.5 Z" fill="none" stroke="#1E1E1E" stroke-width="1"/></svg>
<svg class="a" style="left:1058px;top:377.06px;" width="14" height="11" viewBox="0 0 14 11"><path d="M0.5 1.5 H5.5 L6.5 0.5 H13.5 V10.5 H0.5 Z" fill="#C8A060"/><rect x="0.5" y="2.5" width="13" height="8" fill="#D2AC6A"/></svg>
<div class="t" style="left:1076.5px;top:377.90px;font-size:12px;color:#1E1E1E;font-family:'Liberation Sans',sans-serif;letter-spacing:-0.12px">Scripts</div>
<svg class="a" style="left:1037px;top:397.44px;" width="6" height="10" viewBox="0 0 6 10"><path d="M0.5 0.5 L5 5 L0.5 9.5 Z" fill="none" stroke="#1E1E1E" stroke-width="1"/></svg>
<svg class="a" style="left:1058px;top:394.94px;" width="14" height="11" viewBox="0 0 14 11"><path d="M0.5 1.5 H5.5 L6.5 0.5 H13.5 V10.5 H0.5 Z" fill="#C8A060"/><rect x="0.5" y="2.5" width="13" height="8" fill="#D2AC6A"/></svg>
<div class="t" style="left:1076.5px;top:395.78px;font-size:12px;color:#1E1E1E;font-family:'Liberation Sans',sans-serif;letter-spacing:-0.12px">Views</div>
<div class="t" style="left:1076.5px;top:413.66px;font-size:12px;color:#1E1E1E;font-family:'Liberation Sans',sans-serif;letter-spacing:-0.12px">favicon.ico</div>
<svg class="a" style="left:1037px;top:433.2px;" width="6" height="10" viewBox="0 0 6 10"><path d="M0.5 0.5 L5 5 L0.5 9.5 Z" fill="none" stroke="#1E1E1E" stroke-width="1"/></svg>
<svg class="a" style="left:1055px;top:429.7px;" width="16" height="15" viewBox="0 0 16 15"><path d="M7 1.5 H12 L15.5 5 V12.5 H11" fill="none" stroke="#1E1E1E" stroke-width="1"/><circle cx="5" cy="10.5" r="2.6" fill="none" stroke="#555" stroke-width="1.8" stroke-dasharray="1.3 0.9"/></svg>
<div class="t" style="left:1076.9px;top:431.54px;font-size:12px;color:#1E1E1E;font-family:'Liberation Sans',sans-serif;letter-spacing:-0.37px">Global.asax</div>
<svg class="a" style="left:1056.5px;top:447.58px;" width="15" height="15" viewBox="0 0 15 15"><path d="M5 1.5 H11 L14.5 5 V12.5 H8" fill="none" stroke="#1E1E1E" stroke-width="1"/><path d="M10.5 1.5 V5.5 H14.5" stroke="#1E1E1E" stroke-width="1" fill="none"/><path d="M1.2 2 V5.5 Q1.2 7.5 3.2 7.5 Q5.2 7.5 5.2 5.5 V2 M3.2 7.5 V14" stroke="#1E1E1E" stroke-width="1.6" fill="none"/></svg>
<div class="t" style="left:1076.9px;top:449.42px;font-size:12px;color:#1E1E1E;font-family:'Liberation Sans',sans-serif;letter-spacing:0.02px">packages.config</div>
<svg class="a" style="left:1037px;top:468.96px;" width="6" height="10" viewBox="0 0 6 10"><path d="M0.5 0.5 L5 5 L0.5 9.5 Z" fill="none" stroke="#1E1E1E" stroke-width="1"/></svg>
<svg class="a" style="left:1058.3px;top:468.46px;" width="13" height="8" viewBox="0 0 13 8"><path d="M5.6 1.6 Q4.8 0.7 3.5 0.7 Q0.8 0.7 0.8 3.8 Q0.8 6.9 3.5 6.9 Q4.9 6.9 5.7 6" stroke="#388A34" stroke-width="1.7" fill="none"/><path d="M8 0.5 L7.3 6 M10.5 0.5 L9.8 6 M6.5 2.2 H11.8 M6.2 4.4 H11.5" stroke="#388A34" stroke-width="1.1"/></svg>
<div class="t" style="left:1076.9px;top:467.30px;font-size:12px;color:#1E1E1E;font-family:'Liberation Sans',sans-serif;letter-spacing:-0.2px">Startup.cs</div>
<svg class="a" style="left:1037px;top:486.84px;" width="6" height="10" viewBox="0 0 6 10"><path d="M0.5 0.5 L5 5 L0.5 9.5 Z" fill="none" stroke="#1E1E1E" stroke-width="1"/></svg>
<svg class="a" style="left:1056.5px;top:483.34px;" width="15" height="15" viewBox="0 0 15 15"><path d="M5 1.5 H11 L14.5 5 V12.5 H8" fill="none" stroke="#1E1E1E" stroke-width="1"/><path d="M10.5 1.5 V5.5 H14.5" stroke="#1E1E1E" stroke-width="1" fill="none"/><path d="M1.2 2 V5.5 Q1.2 7.5 3.2 7.5 Q5.2 7.5 5.2 5.5 V2 M3.2 7.5 V14" stroke="#1E1E1E" stroke-width="1.6" fill="none"/></svg>
<div class="t" style="left:1076.9px;top:485.18px;font-size:12px;color:#1E1E1E;font-family:'Liberation Sans',sans-serif;letter-spacing:0.11px">Web.config</div>
<div class="a" style="left:1007px;top:676px;width:99px;height:18px;background:#FFFFFF"></div>
<div class="t" style="left:1012px;top:678.84px;font-size:12px;color:#1E1E1E;font-family:'Liberation Sans',sans-serif;letter-spacing:-0.12px">Solution Explorer</div>
<div class="t" style="left:1111.5px;top:678.84px;font-size:12px;color:#FFFFFF;font-family:'Liberation Sans',sans-serif;letter-spacing:-0.26px">Team Explorer</div>
<div class="a" style="left:1190px;top:676px;width:1px;height:16px;background:#3F5478"></div>
<div class="t" style="left:1196.5px;top:678.84px;font-size:12px;color:#FFFFFF;font-family:'Liberation Sans',sans-serif;letter-spacing:-0.44px">Class View</div>
<div class="a" style="left:760px;top:351px;width:408px;height:84px;background:#EEEEF2;border:1px solid #8E8E8E"></div>
<div class="t" style="left:767px;top:357.84px;font-size:12px;color:#1E1E1E;font-family:'Liberation Sans',sans-serif;font-weight:700;letter-spacing:-0.19px">AccountController.cs (121,27)</div>
<div class="t" style="left:767px;top:372.84px;font-size:12px;color:#3C3C3C;font-family:'Liberation Sans',sans-serif">WebApplication1.Controllers.AccountController.Disassociate(string, string)</div>
<div class="t" style="left:767px;top:387.84px;font-size:12px;color:#3C3C3C;font-family:'Liberation Sans',sans-serif">120</div>
<div class="t" style="left:815px;top:387.84px;font-size:12px;color:#3C3C3C;font-family:'Liberation Sans',sans-serif">{</div>
<div class="t" style="left:767px;top:402.84px;font-size:12px;color:#3C3C3C;font-family:'Liberation Sans',sans-serif">121</div>
<div class="t" style="left:815px;top:402.84px;font-size:12px;color:#3C3C3C;letter-spacing:-0.21px">await <span style="color:#1E1E1E;background:#FFF8A0;padding:2px 0 0.5px 0">Secrets</span>.Delete(providerKey);</div>
<div class="t" style="left:767px;top:417.84px;font-size:12px;color:#3C3C3C;font-family:'Liberation Sans',sans-serif">122</div>
<div class="t" style="left:815px;top:417.84px;font-size:12px;color:#3C3C3C;font-family:'Liberation Sans',sans-serif">}</div>
<div class="a" style="left:0px;top:700px;width:1362px;height:23px;background:#007ACC"></div>
<div class="t" style="left:4.8px;top:705.84px;font-size:12px;color:#FFFFFF;font-family:'Liberation Sans',sans-serif;letter-spacing:-0.5px">Ready</div>
<div class="t" style="left:1007px;top:705.84px;font-size:12px;color:#FFFFFF;font-family:'Liberation Sans',sans-serif;letter-spacing:-0.35px">Ln 27</div>
<div class="t" style="left:1099.5px;top:705.84px;font-size:12px;color:#FFFFFF;font-family:'Liberation Sans',sans-serif;letter-spacing:-0.1px">Col 9</div>
<div class="t" style="left:1191px;top:705.84px;font-size:12px;color:#FFFFFF;font-family:'Liberation Sans',sans-serif;letter-spacing:-0.1px">Ch 9</div>
<div class="t" style="left:1327px;top:705.84px;font-size:12px;color:#FFFFFF;font-family:'Liberation Sans',sans-serif;letter-spacing:-0.75px">INS</div>
<div class="a" style="left:0px;top:723px;width:1362px;height:8px;background:#4584C6"></div>
<div class="a" style="left:53px;top:724px;width:58px;height:7px;background:#6C9DD6;border:1px solid #8DB4E2;border-bottom:none"></div>
<div class="a" style="left:177px;top:724px;width:58px;height:7px;background:#93BBE8;border:1px solid #D0E2F6;border-bottom:none"></div>
<svg class="a" style="left:33px;top:728px;" width="7" height="3" viewBox="0 0 7 3"><path d="M0 3 L6.5 0.5 V3 Z" fill="#E8EEF6"/></svg>
<svg class="a" style="left:79px;top:725px;" width="18" height="6" viewBox="0 0 18 6"><path d="M2 6 Q9 -1 16 3" stroke="#F2C01E" stroke-width="2" fill="none"/><path d="M6 6 Q9 2 13 6" stroke="#1B6FC8" stroke-width="2.5" fill="none"/></svg>
<div class="a" style="left:130px;top:729px;width:15px;height:2px;background:#E5BE3C"></div>
<svg class="a" style="left:208px;top:725px;" width="15" height="6" viewBox="0 0 15 6"><path d="M3 6 L8 1.5 L13 6 Z" fill="#FFFFFF"/><path d="M6 6 L9.5 3.2 L13 6 Z" fill="#68217A"/></svg>
<div class="a" style="left:947px;top:724px;width:70px;height:7px;background:#5FAAF2"></div>
<div class="a" style="left:1017px;top:723px;width:8px;height:8px;background:#4C8FD5"></div>
<div class="a" style="left:1025px;top:723px;width:336px;height:8px;background:#4AA3F2"></div>
<div class="a" style="left:0px;top:0px;width:1362px;height:1px;background:#000"></div>
<div class="a" style="left:0px;top:0px;width:1px;height:732px;background:#000"></div>
<div class="a" style="left:1361px;top:0px;width:1px;height:732px;background:#000"></div>
<div class="a" style="left:0px;top:731px;width:1362px;height:1px;background:#000"></div>
</body></html>
